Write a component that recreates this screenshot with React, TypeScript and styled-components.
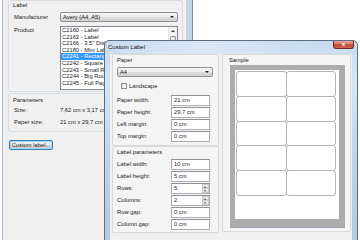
import React from 'react';
import styled, { createGlobalStyle } from 'styled-components';

const GlobalStyle = createGlobalStyle`
  html, body {
    margin: 0;
    padding: 0;
    background: #ffffff;
  }
  body {
    width: 360px;
    height: 240px;
    overflow: hidden;
    font-family: "Liberation Sans", Arial, sans-serif;
    font-size: 5.8px;
    color: #1b1b1b;
  }
`;

const Desktop = styled.div`
  position: relative;
  width: 360px;
  height: 240px;
  overflow: hidden;
  background: #ffffff;
`;

/* ---------- back window ---------- */

const BackWindow = styled.div`
  position: absolute;
  left: 2px;
  top: 0;
  width: 190px;
  height: 250px;
  box-sizing: border-box;
  background: #f0f0f0;
  border-left: 1px solid #a9bcd1;
  border-right: 6px solid #c4d5e7;
  box-shadow: 1px 0 0 #7a8ea6;
  padding: 0 3px 0 5px;
  display: flex;
  flex-direction: column;
`;

const Group = styled.div<{ $top?: number; $bottom?: number }>`
  border: 1px solid #d5dde3;
  border-radius: 3px;
  margin-top: ${(p) => p.$top ?? 0}px;
  padding-bottom: ${(p) => p.$bottom ?? 2}px;
  display: flex;
  flex-direction: column;
`;

const GroupTitle = styled.div<{ $pad?: number; $indent?: number }>`
  height: 8px;
  line-height: 8px;
  margin-top: ${(p) => p.$pad ?? 0}px;
  padding-left: ${(p) => p.$indent ?? 4}px;
  color: #1e3287;
  color: #222;
`;

const FormRow = styled.div<{ $top?: number; $h?: number; $labelW: number; $indent?: number }>`
  display: grid;
  grid-template-columns: ${(p) => p.$labelW}px 1fr;
  align-items: center;
  height: ${(p) => p.$h ?? 12}px;
  margin-top: ${(p) => p.$top ?? 0}px;
  padding-left: ${(p) => p.$indent ?? 5}px;
  padding-right: 4px;
`;

const TopRow = styled(FormRow)`
  align-items: start;
  height: auto;
`;

const FieldLabel = styled.span<{ $padTop?: number }>`
  white-space: nowrap;
  line-height: 7px;
  padding-top: ${(p) => p.$padTop ?? 0}px;
`;

const Combo = styled.div<{ $w?: number }>`
  position: relative;
  height: 10px;
  width: ${(p) => (p.$w ? `${p.$w}px` : 'auto')};
  box-sizing: border-box;
  border: 1px solid #8e8f8f;
  border-radius: 2px;
  background: linear-gradient(#f6f6f6 0%, #ebebeb 50%, #dcdcdc 51%, #d2d2d2 100%);
  line-height: 8px;
  padding-left: 2px;
  &::after {
    content: '';
    position: absolute;
    right: 3px;
    top: 3px;
    border-left: 2px solid transparent;
    border-right: 2px solid transparent;
    border-top: 2.5px solid #222;
  }
`;

const ListBox = styled.div`
  position: relative;
  height: 64px;
  box-sizing: border-box;
  border: 1px solid #828790;
  background: #ffffff;
  overflow: hidden;
`;

const ListItem = styled.div<{ $selected?: boolean }>`
  height: 6.6px;
  line-height: 6.6px;
  padding-left: 1px;
  margin-right: 9px;
  white-space: nowrap;
  background: ${(p) => (p.$selected ? '#3399ff' : 'transparent')};
  color: ${(p) => (p.$selected ? '#ffffff' : '#1b1b1b')};
`;

const ScrollBar = styled.div`
  position: absolute;
  right: 0;
  top: 0;
  bottom: 0;
  width: 8px;
  background: #f0f0f0;
  border-left: 1px solid #e6e6e6;
`;

const ScrollArrow = styled.div`
  position: absolute;
  left: 2px;
  top: 3px;
  border-left: 2px solid transparent;
  border-right: 2px solid transparent;
  border-bottom: 2.5px solid #3a3a3a;
`;

const ScrollThumb = styled.div`
  position: absolute;
  left: 1px;
  right: 1px;
  top: 9px;
  height: 20px;
  border: 1px solid #9a9a9a;
  border-radius: 1px;
  background: linear-gradient(90deg, #f4f4f4, #dedede);
`;

const PushButton = styled.div`
  margin: 8px 0 0 1px;
  width: 44px;
  height: 10px;
  box-sizing: border-box;
  border: 1px solid #3c7fb1;
  border-radius: 2px;
  box-shadow: inset 0 0 0 1px #9fd5f5;
  background: linear-gradient(#f2f2f2 0%, #ebebeb 50%, #dddddd 51%, #cfcfcf 100%);
  line-height: 8px;
  text-align: center;
`;

/* ---------- front dialog ---------- */

const Dialog = styled.div`
  position: absolute;
  left: 104px;
  top: 40px;
  width: 254px;
  height: 215px;
  box-sizing: border-box;
  border: 1px solid #5b6e84;
  border-radius: 5px 5px 0 0;
  background: linear-gradient(180deg, #c6daef 0%, #d7e5f4 20%, #bcd0e6 60%, #b3c8df 100%);
  display: flex;
  flex-direction: column;
`;

const TitleBar = styled.div`
  position: relative;
  height: 13px;
  line-height: 12px;
  padding-left: 3px;
  font-size: 6px;
  color: #111;
  background: linear-gradient(90deg, rgba(255,255,255,0) 0%, rgba(255,255,255,0.35) 40%, rgba(255,255,255,0.1) 70%, rgba(255,255,255,0) 100%);
`;

const CloseButton = styled.div`
  position: absolute;
  right: 3px;
  top: 0;
  width: 21px;
  height: 8px;
  box-sizing: border-box;
  border: 1px solid #6e2b26;
  border-top: none;
  border-radius: 0 0 3px 3px;
  background: linear-gradient(#e9a99b 0%, #d5705f 45%, #c4402d 55%, #d26b52 100%);
  color: #fff;
  font-size: 6px;
  font-weight: bold;
  line-height: 7px;
  text-align: center;
`;

const Client = styled.div`
  flex: 1;
  margin: 0 5px;
  background: #f0f0f0;
  display: flex;
  gap: 3px;
  padding: 0 0 0 2px;
`;

const LeftColumn = styled.div`
  width: 107px;
  display: flex;
  flex-direction: column;
`;

const Panel = styled.div<{ $bottom?: number }>`
  border: 1px solid #d9d9d9;
  border-radius: 2px;
  background: #f4f4f4;
  padding-bottom: ${(p) => p.$bottom ?? 3}px;
  display: flex;
  flex-direction: column;
`;

const Indented = styled.div<{ $top?: number }>`
  margin: ${(p) => p.$top ?? 0}px 4px 0 4px;
`;

const CheckRow = styled.label`
  display: flex;
  align-items: center;
  height: 7px;
  margin: 5px 0 0 8px;
  gap: 2px;
`;

const CheckBox = styled.span`
  width: 6px;
  height: 6px;
  box-sizing: border-box;
  border: 1px solid #8f8f8f;
  background: linear-gradient(135deg, #dcdcdc, #fbfbfb);
`;

const TextInput = styled.div`
  position: relative;
  width: 39px;
  height: 11px;
  box-sizing: border-box;
  border: 1px solid #abadb3;
  border-top-color: #8e9095;
  background: #ffffff;
  line-height: 9px;
  padding-left: 2px;
`;

const Spinner = styled.div`
  position: absolute;
  right: 0;
  top: 0;
  bottom: 0;
  width: 7px;
  display: flex;
  flex-direction: column;
`;

const SpinButton = styled.div<{ $down?: boolean }>`
  flex: 1;
  position: relative;
  border: 1px solid #c9c9c9;
  background: linear-gradient(#f5f5f5, #e2e2e2);
  &::after {
    content: '';
    position: absolute;
    left: 1px;
    top: 1px;
    border-left: 1.5px solid transparent;
    border-right: 1.5px solid transparent;
    ${(p) => (p.$down ? 'border-top: 2px solid #555;' : 'border-bottom: 2px solid #555;')}
  }
`;

const SamplePanel = styled(Panel)`
  width: 129px;
  height: 178px;
  box-sizing: border-box;
`;

const PreviewFrame = styled.div`
  margin: 1px 0 0 7px;
  width: 115px;
  height: 163px;
  box-sizing: border-box;
  padding: 5px 0 0 5px;
  background: #acacac;
  border-bottom: 1px solid #9aa6b6;
`;

const Paper = styled.div`
  width: 104px;
  height: 149px;
  background: #ffffff;
  padding: 1px 0 0 1px;
  box-sizing: border-box;
  display: grid;
  grid-template-columns: repeat(2, 49.5px);
  grid-auto-rows: 24.75px;
  align-content: start;
`;

const LabelCell = styled.div`
  width: calc(100% + 1px);
  height: calc(100% + 1px);
  box-sizing: border-box;
  border: 1px solid #b4b4b4;
  border-radius: 3px;
`;

const listItems = [
  'C2160 - Label',
  'C2163 - Label',
  'C2166 - 3.5" Disk Label',
  'C2180 - Mini Label',
  'C2241 - Rectangle',
  'C2242 - Square Sticker',
  'C2243 - Small Round',
  'C2244 - Big Round',
  'C2245 - Full Page',
];

type Field = { label: string; value: string; spin?: boolean };

const paperFields: Field[] = [
  { label: 'Paper width:', value: '21 cm' },
  { label: 'Paper height:', value: '29,7 cm' },
  { label: 'Left margin:', value: '0 cm' },
  { label: 'Top margin:', value: '0 cm' },
];

const labelFields: Field[] = [
  { label: 'Label width:', value: '10 cm' },
  { label: 'Label height:', value: '5 cm' },
  { label: 'Rows:', value: '5', spin: true },
  { label: 'Columns:', value: '2', spin: true },
  { label: 'Row gap:', value: '0 cm' },
  { label: 'Column gap:', value: '0 cm' },
];

const FieldRows: React.FC<{ fields: Field[]; top: number }> = ({ fields, top }) => (
  <>
    {fields.map((f, i) => (
      <FormRow key={f.label} $labelW={54} $h={12} $top={i === 0 ? top : 0} $indent={4}>
        <FieldLabel>{f.label}</FieldLabel>
        <TextInput>
          {f.value}
          {f.spin && (
            <Spinner>
              <SpinButton />
              <SpinButton $down />
            </Spinner>
          )}
        </TextInput>
      </FormRow>
    ))}
  </>
);

const App: React.FC = () => {
  return (
    <Desktop>
      <GlobalStyle />

      <BackWindow>
        <Group $bottom={1}>
          <GroupTitle>Label</GroupTitle>
          <FormRow $labelW={46} $h={10} $top={3}>
            <FieldLabel>Manufacturer</FieldLabel>
            <Combo>Avery (A4, A5)</Combo>
          </FormRow>
          <TopRow $labelW={46} $top={4}>
            <FieldLabel $padTop={1}>Product</FieldLabel>
            <ListBox>
              {listItems.map((item, i) => (
                <ListItem key={item} $selected={i === 4}>
                  {item}
                </ListItem>
              ))}
              <ScrollBar>
                <ScrollArrow />
                <ScrollThumb />
              </ScrollBar>
            </ListBox>
          </TopRow>
        </Group>

        <Group $top={1} $bottom={3}>
          <GroupTitle $pad={2}>Parameters</GroupTitle>
          <FormRow $labelW={46}>
            <FieldLabel>Size:</FieldLabel>
            <span>7,62 cm x 3,17 cm</span>
          </FormRow>
          <FormRow $labelW={46}>
            <FieldLabel>Paper size:</FieldLabel>
            <span>21 cm x 29,7 cm</span>
          </FormRow>
        </Group>

        <PushButton>Custom label...</PushButton>
      </BackWindow>

      <Dialog>
        <TitleBar>
          Custom Label
          <CloseButton>x</CloseButton>
        </TitleBar>
        <Client>
          <LeftColumn>
            <Panel $bottom={3}>
              <GroupTitle $pad={1}>Paper</GroupTitle>
              <Indented $top={3}>
                <Combo $w={96}>A4</Combo>
              </Indented>
              <CheckRow>
                <CheckBox />
                Landscape
              </CheckRow>
              <FieldRows fields={paperFields} top={5} />
            </Panel>
            <Panel $bottom={2}>
              <GroupTitle $pad={1}>Label parameters</GroupTitle>
              <FieldRows fields={labelFields} top={2} />
            </Panel>
          </LeftColumn>

          <SamplePanel>
            <GroupTitle $pad={1} $indent={6}>Sample</GroupTitle>
            <PreviewFrame>
              <Paper>
                {Array.from({ length: 10 }).map((_, i) => (
                  <LabelCell key={i} />
                ))}
              </Paper>
            </PreviewFrame>
          </SamplePanel>
        </Client>
      </Dialog>
    </Desktop>
  );
};

export default App;
